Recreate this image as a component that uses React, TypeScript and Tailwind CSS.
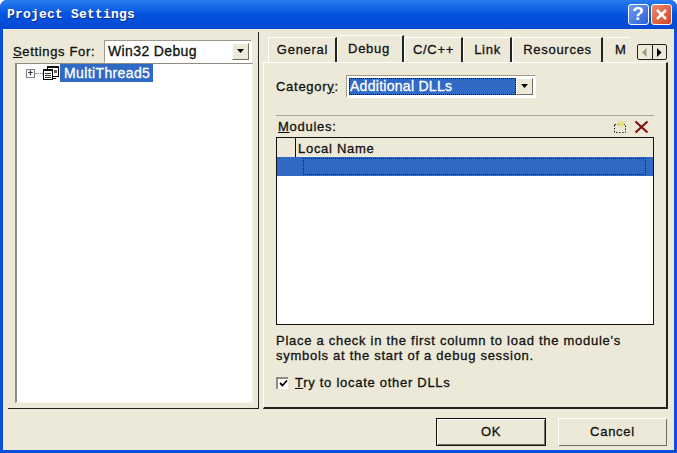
const FONT = "font-['Liberation_Sans',Arial,sans-serif]"

function ComboArrow() {
  return (
    <div className="w-[17px] self-stretch flex items-center justify-center bg-[#ece9d8] border border-t-white border-l-white border-r-[#716f64] border-b-[#716f64]">
      <svg width="9" height="5" viewBox="0 0 9 5" aria-hidden="true">
        <path d="M1 0h7L4.500 4z" fill="#000" />
      </svg>
    </div>
  )
}

function TreeIcon() {
  return (
    <svg width="16" height="16" viewBox="0 0 16 16" aria-hidden="true" shapeRendering="crispEdges">
      <path d="M4.500 1.500h11v10h-11z" fill="#fff" stroke="#000" />
      <path d="M4 1h12v2H4z" fill="#111" />
      <path d="M11 5h3v3h-3z" fill="#666" />
      <path d="M.5 4.500h9v10h-9z" fill="#fff" stroke="#000" />
      <path d="M0 4h10v2H0z" fill="#111" />
      <path d="M2 8h6v1H2zM2 10h6v1H2zM2 12h6v1H2z" fill="#333" />
      <path d="M10 11h5v1h-5zM10 13h3v1h-3z" fill="#000" />
    </svg>
  )
}

function Tab({ label, active, width }: { label: string; active?: boolean; width: string }) {
  if (active) {
    return (
      <div className={`${width} h-[27px] -mt-0.5 pt-[3px] pr-0.5 text-center border-t border-l border-white border-r-2 border-r-[#222] bg-[#ece9d8] -mb-px relative`}>
        {label}
      </div>
    )
  }
  return (
    <div className={`${width} h-[25px] pt-[2px] pl-px text-center border-t border-l border-white border-r-2 border-r-[#222]`}>
      {label}
    </div>
  )
}

export default function App() {
  return (
    <div className={`${FONT} w-[677px] h-[453px] flex flex-col overflow-hidden rounded-t-[7px] bg-[#0a4fdc] text-[13px] font-medium tracking-[0.72px] text-[#111] [-webkit-text-stroke:0.3px_#111]`}>
      {/* Title bar */}
      <div className="h-[29px] shrink-0 flex items-center pl-[7px] pr-[5px] bg-gradient-to-b from-[#2a7cf0] via-[#0553e0] to-[#0549d2]">
        <span className="font-['Liberation_Mono',monospace] flex-1 text-[13px] font-bold tracking-[0.2px] text-white [-webkit-text-stroke:0px] [text-shadow:1px_1px_0_#0a2f90]">
          Project Settings
        </span>
        <div className="w-[21px] h-[21px] flex items-center justify-center rounded-[3px] border border-white bg-gradient-to-br from-[#6f9cf0] to-[#2c5fd8] text-[19px] font-bold text-white [-webkit-text-stroke:0px]">
          ?
        </div>
        <div className="ml-0.5 w-[21px] h-[21px] flex items-center justify-center rounded-[3px] border border-white bg-gradient-to-br from-[#ea8a68] to-[#d0421f]">
          <svg width="13" height="13" viewBox="0 0 13 13" aria-hidden="true">
            <path d="M2 2l9 9M11 2l-9 9" stroke="#fff" strokeWidth="2.500" />
          </svg>
        </div>
      </div>

      {/* Dialog body */}
      <div className="flex-1 mx-[3px] mb-[3px] flex flex-col bg-[#ece9d8] px-[5px]">
        <div className="h-[377px] mt-[3px] flex gap-1">
          {/* Left pane */}
          <div className="w-[251px] flex flex-col border-r border-b border-[#222] pl-[7px] pr-[6px] pt-2">
            <div className="h-[23px] flex items-center">
              <span className="w-[91px] -ml-0.5 tracking-[0.65px]">
                <u>S</u>ettings For:
              </span>
              <div className="w-[148px] h-[23px] flex items-center bg-white border border-t-[#9d9a8c] border-l-[#9d9a8c] border-r-white border-b-white pl-[3px] text-[14px] tracking-[0.37px] p-0.5">
                <span className="flex-1">Win32 Debug</span>
                <ComboArrow />
              </div>
            </div>
            <div className="w-[238px] h-[340px] bg-white border-l-2 border-t border-r border-b border-t-[#8f8d82] border-l-[#8f8d82] border-r-[#f6f4ea] border-b-[#f6f4ea] pl-[9px]">
              <div className="flex items-center h-[18px]">
                <div className="w-[9px] h-[9px] flex items-center justify-center border border-[#808080] text-[9px] leading-none tracking-normal">
                  +
                </div>
                <div className="w-[8px] border-t border-dotted border-[#808080]" />
                <TreeIcon />
                <span className="ml-px w-[93px] h-[18px] pl-[4px] bg-[#316ac5] text-white [-webkit-text-stroke:0.3px_#fff] text-[14px] tracking-[0.38px] leading-[18px]">
                  MultiThread5
                </span>
              </div>
            </div>
          </div>

          {/* Right pane */}
          <div className="w-[405px] flex flex-col">
            <div className="h-[30px] shrink-0 flex items-end pl-[5px] pb-0">
              <div className="flex h-[25px] items-start">
                <Tab label="General" width="w-[69px]" />
                <Tab label="Debug" active width="w-[67px]" />
                <Tab label="C/C++" width="w-[59px]" />
                <Tab label="Link" width="w-[49px]" />
                <Tab label="Resources" width="w-[91px]" />
                <div className="w-[27px] h-[25px] pt-[2px] pl-[12px] border-t border-white overflow-hidden">M</div>
              </div>
              <div className="ml-[7px] mb-0.5 flex w-[30px] h-[16px] border border-[#222] rounded-[2px] bg-[#ece9d8]">
                <div className="flex-1 flex items-center justify-center border-r border-[#222]">
                  <svg width="5" height="9" viewBox="0 0 5 9" aria-hidden="true"><path d="M4.500 0v9L0 4.500z" fill="#9d9a8c" /></svg>
                </div>
                <div className="flex-1 flex items-center justify-center">
                  <svg width="5" height="9" viewBox="0 0 5 9" aria-hidden="true"><path d="M0 0v9l4.500-4.500z" fill="#000" /></svg>
                </div>
              </div>
            </div>

            <div className="flex-1 flex flex-col border-t border-l border-t-white border-l-white border-r-2 border-b-2 border-r-[#222] border-b-[#222] pl-[12px] pr-[12px]">
              {/* Category */}
              <div className="mt-3 h-[23px] flex items-center">
                <span className="w-[70px]">
                  Categor<u>y</u>:
                </span>
                <div className="w-[190px] h-[23px] flex items-center bg-white border border-t-[#9d9a8c] border-l-[#9d9a8c] border-r-white border-b-white p-0.5">
                  <span className="flex-1 self-stretch bg-[#316ac5] text-white [-webkit-text-stroke:0.3px_#fff] text-[14px] tracking-[0.28px] leading-[15px] border border-dotted border-[#111]">
                    Additional DLLs
                  </span>
                  <ComboArrow />
                </div>
              </div>

              {/* Modules list */}
              <div className="mt-[17px] h-[22px] flex items-center border-t border-[#aca899] pl-0.5 pr-[5px]">
                <span className="flex-1">
                  <u>M</u>odules:
                </span>
                <svg width="15" height="14" viewBox="0 0 15 14" aria-hidden="true">
                  <path d="M1.500 4.500h11v8h-11z" fill="none" stroke="#222" strokeDasharray="1.500 1.500" />
                  <path d="M8 0l1 2 2 -1 -1 2 2 1 -2 1 1 2-2-1-1 2-1-2-2 1 1-2-2-1 2-1-1-2 2 1z" fill="#e2e27c" />
                </svg>
                <svg className="ml-1.5" width="15" height="14" viewBox="0 0 15 14" aria-hidden="true">
                  <path d="M1.500 1.500l12 11M13.500 1.500l-12 11" stroke="#7d1210" strokeWidth="2.200" />
                </svg>
              </div>
              <div className="w-[378px] h-[188px] shrink-0 flex flex-col bg-white border border-[#111]">
                <div className="h-[19px] shrink-0 flex bg-[#ece9d8]">
                  <div className="w-[19px] border-r border-[#111]" />
                  <div className="pl-0.5 leading-[21px]">Local Name</div>
                </div>
                <div className="h-[19px] shrink-0 flex bg-[#316ac5] pl-[26px] pr-[7px] py-[1px]">
                  <div className="flex-1 border border-dotted border-[#10204a]" />
                </div>
              </div>

              {/* Help text */}
              <p className="mt-[8px] leading-[15px] whitespace-nowrap">
                Place a check in the first column to load the module&apos;s
                <br />
                symbols at the start of a debug session.
              </p>
              <div className="mt-[10px] flex items-center">
                <div className="w-[12px] h-[12px] flex items-center justify-center bg-white border-l-2 border-t-2 border-[#8f8d82]">
                  <svg width="9" height="9" viewBox="0 0 9 9" aria-hidden="true">
                    <path d="M1 4l2.500 2.500L8 1.500" fill="none" stroke="#000" strokeWidth="1.800" />
                  </svg>
                </div>
                <span className="ml-[7px]">
                  <u>T</u>ry to locate other DLLs
                </span>
              </div>
            </div>
          </div>
        </div>

        {/* Footer buttons */}
        <div className="mt-[9px] mr-[2px] flex justify-end gap-3">
          <button className="w-[110px] h-[28px] bg-[#ece9d8] border border-[#111] shadow-[inset_1px_1px_0_#fff,inset_-1px_-1px_0_#716f64]">
            OK
          </button>
          <button className="w-[109px] h-[28px] bg-[#ece9d8] shadow-[inset_1px_1px_0_#fff,inset_-1px_-1px_0_#716f64]">
            Cancel
          </button>
        </div>
      </div>
    </div>
  )
}
